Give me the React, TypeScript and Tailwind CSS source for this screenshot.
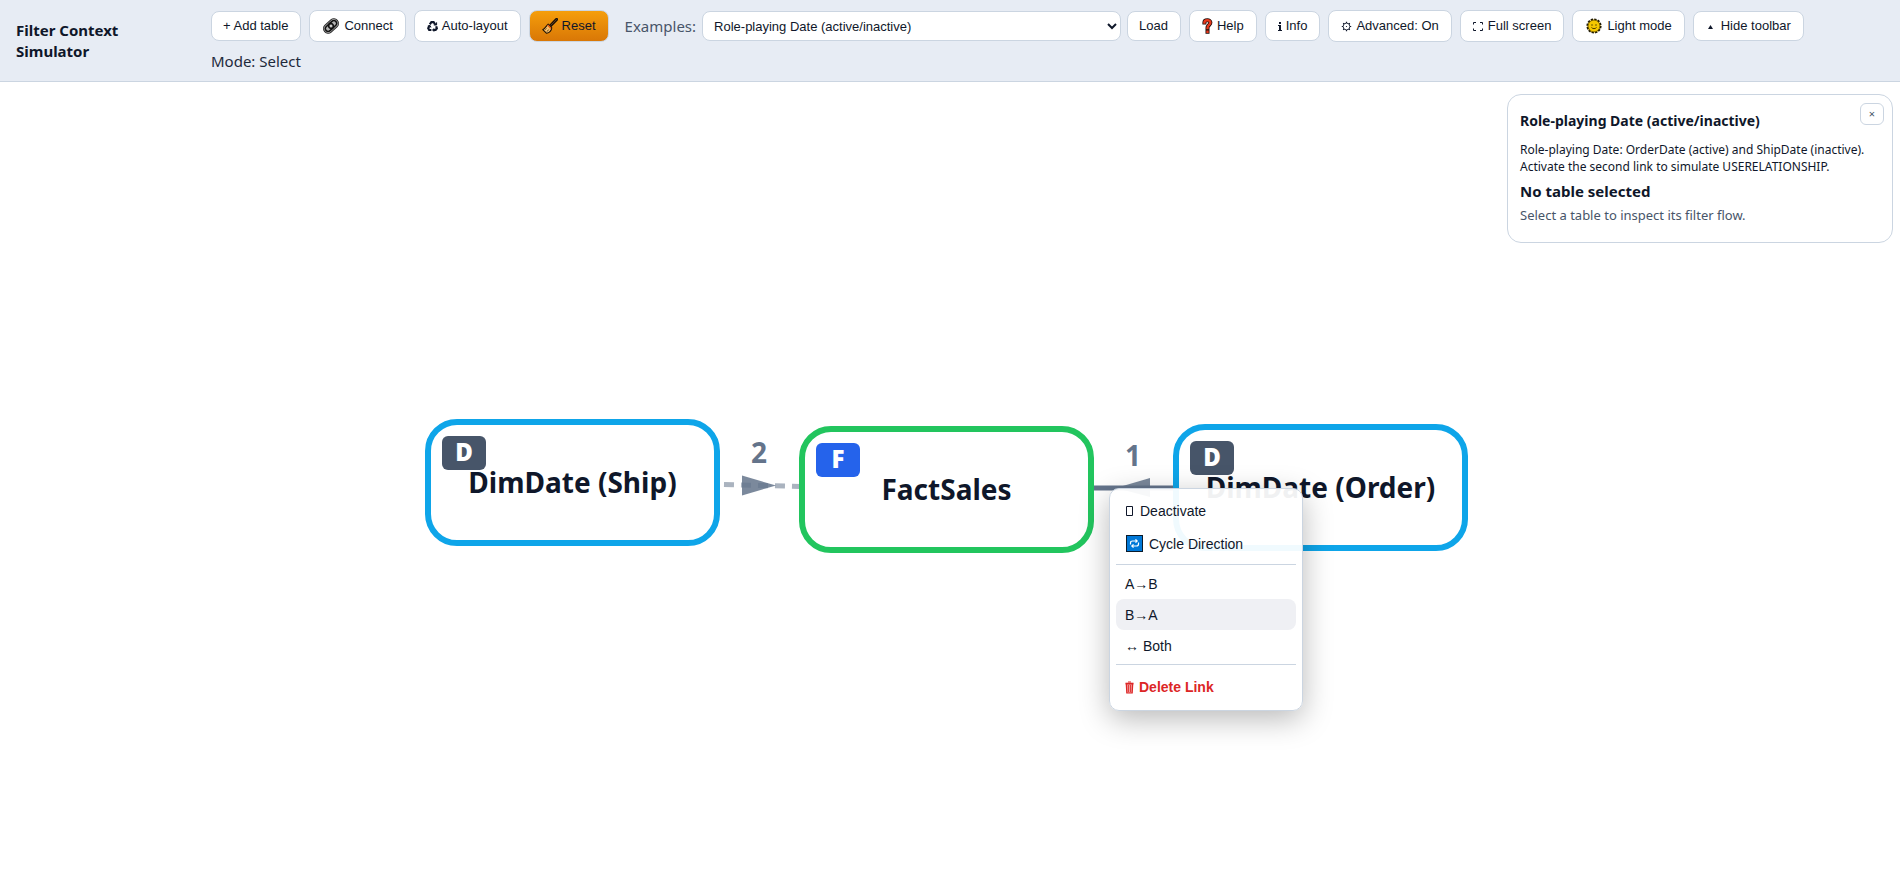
import { useState, type ReactNode } from "react";

const UI = "font-['Noto_Sans',sans-serif]";
const CONTROL = "font-['Liberation_Sans',Arial,sans-serif] text-[13px] text-[#0f172a]";

function LinkIcon() {
  return (
    <svg width="18" height="18" viewBox="0 0 18 18" fill="none" aria-hidden="true">
      <g transform="rotate(-42 9 9)">
        <rect x="0.5" y="4.4" width="17" height="9.2" rx="4.6" fill="#b4b4b4" stroke="#2a2a2a" strokeWidth="1" />
        <rect x="2.4" y="6.2" width="9" height="5.6" rx="2.8" stroke="#111" strokeWidth="1.5" />
        <rect x="6.6" y="6.2" width="9" height="5.6" rx="2.8" stroke="#111" strokeWidth="1.5" />
        <circle cx="9" cy="9" r="1.5" fill="#fff" stroke="#333" strokeWidth=".8" />
      </g>
    </svg>
  );
}

function RecycleIcon() {
  return (
    <svg width="11" height="12" viewBox="0 0 11 12" fill="none" stroke="#0f172a" strokeWidth="2.2" aria-hidden="true">
      <path d="M2.8 4.4 4.4 2.2h2.2l1.4 2" />
      <path d="M9.2 6.2 9.8 8.4 8.6 10H6.4" />
      <path d="M4.4 10H2.2L1.2 8.2 2.2 6.2" />
      <path d="M9.6 2.4v2.6H6.8M7 8.4 5.6 10 7 11.5M.8 6l2.2-.6 1 2" strokeWidth="1" fill="#0f172a" />
    </svg>
  );
}

function BroomIcon() {
  return (
    <svg width="16" height="16" viewBox="0 0 16 16" aria-hidden="true">
      <path d="M14.6 1.4 8.2 8" stroke="#1c1206" strokeWidth="3" strokeLinecap="round" />
      <path d="M14.4 1.6 8.6 7.4" stroke="#5a3a20" strokeWidth="1" strokeLinecap="round" />
      <path d="M6.2 6.2 9.8 9.8C9.4 13 7 14.8 4.6 15.3L.8 11.6C2.6 11.2 4.2 8 6.2 6.2Z" fill="#f9c06a" stroke="#1c1206" strokeWidth="1.1" strokeLinejoin="round" />
      <path d="M5.6 7 9 10.4" stroke="#e8590c" strokeWidth="1.4" />
      <path d="M3 11.8 4.4 10.4M5 13.6 6.6 11.6" stroke="#1c1206" strokeWidth=".7" />
    </svg>
  );
}

function HelpIcon() {
  return (
    <svg width="11" height="16" viewBox="0 0 11 16" fill="none" strokeLinecap="square" aria-hidden="true">
      <path d="M2.4 4.6C2.4 1.6 8.4 1.4 8.4 4.6 8.4 7 5.5 7 5.5 10M5.5 13.6v.2" stroke="#1b0d0a" strokeWidth="4" />
      <path d="M2.4 4.6C2.4 1.6 8.4 1.4 8.4 4.6 8.4 7 5.5 7 5.5 10M5.5 13.6v.2" stroke="#e8381b" strokeWidth="2.4" />
    </svg>
  );
}

function InfoIcon() {
  return (
    <svg width="4" height="11" viewBox="0 0 4 11" fill="#0f172a" aria-hidden="true">
      <path d="M1 1h2v2H1zM0 4h3v5h1v1H0V9h1V5H0z" />
    </svg>
  );
}

function GearIcon() {
  return (
    <svg width="11" height="11" viewBox="0 0 11 11" fill="none" stroke="#0f172a" aria-hidden="true">
      <circle cx="5.5" cy="5.5" r="3.4" strokeWidth=".9" />
      <circle cx="5.5" cy="5.5" r=".6" fill="#0f172a" stroke="none" />
      <path
        d="M5.5.8v1.2M5.5 9v1.2M.8 5.5H2M9 5.5h1.2M2.2 2.2l.8.8M8 8l.8.8M8.8 2.2 8 3M3 8l-.8.8"
        strokeWidth="1.2"
      />
    </svg>
  );
}

function ExpandIcon() {
  return (
    <svg width="11" height="11" viewBox="0 0 11 11" fill="none" stroke="#0f172a" strokeWidth="1" aria-hidden="true">
      <path d="M.5 3.5v-2H3M7 1.500h2.5v2M9.5 7.5v2H7M3 9.5H.5v-2" />
    </svg>
  );
}

function SunIcon() {
  return (
    <svg width="18" height="18" viewBox="0 0 18 18" aria-hidden="true">
      <circle cx="9" cy="9" r="6.6" fill="#ffc800" stroke="#1f1a05" strokeWidth="2" strokeDasharray="2.3 1.16" />
      <circle cx="9" cy="9" r="5.9" fill="#f5c800" stroke="#4a3a00" strokeWidth=".6" />
      <circle cx="7" cy="8" r=".7" fill="#3b2d00" />
      <circle cx="11" cy="8" r=".7" fill="#3b2d00" />
      <path d="M6.5 10.5c1.1 1.5 3.9 1.5 5 0" fill="none" stroke="#3b2d00" strokeWidth=".9" />
    </svg>
  );
}

function TriangleIcon() {
  return (
    <svg width="11" height="11" viewBox="0 0 11 11" fill="#0f172a" aria-hidden="true">
      <path d="M4.5 4 7 8H2z" />
    </svg>
  );
}

function MissingGlyphIcon() {
  return (
    <svg width="8" height="12" viewBox="0 0 8 12" fill="none" stroke="#0f172a" strokeWidth="1" aria-hidden="true">
      <path d="M1.5 1.5h6v9h-6z" />
    </svg>
  );
}

function CycleIcon() {
  return (
    <svg width="17" height="17" viewBox="0 0 17 17" fill="none" aria-hidden="true">
      <rect x=".5" y=".5" width="16" height="16" fill="#0078d7" stroke="#0b1b2b" />
      <path
        d="M4.5 9.5V8c0-1.4.8-2 2-2H11M9.5 4.3 11.2 6 9.5 7.7M12.5 7.5V9c0 1.4-.8 2-2 2H6M7.5 9.3 5.8 11l1.7 1.7"
        stroke="#fff"
        strokeWidth="1.2"
      />
    </svg>
  );
}

function TrashIcon() {
  return (
    <svg width="9" height="13" viewBox="0 0 9 13" fill="none" stroke="#dc2626" aria-hidden="true">
      <path d="M.5 2.5h8" strokeWidth="1.6" />
      <path d="M3 1h3" strokeWidth="1" />
      <path d="M1.3 3 1.8 12h5.4l.5-9z" fill="#f29a9a" strokeWidth="1.2" />
      <path d="M3.4 4v7M5.6 4v7" strokeWidth=".9" />
    </svg>
  );
}

function ToolButton({ icon, tall, accent, children }: { icon?: ReactNode; tall?: boolean; accent?: boolean; children: ReactNode }) {
  return (
    <button
      type="button"
      className={`${CONTROL} flex items-center gap-1 whitespace-nowrap rounded-lg border border-[#cbd5e1] pr-3 ${
        icon ? "pl-3" : "pl-[11px]"
      } ${tall ? "h-8" : "h-[30px]"} ${accent ? "bg-[linear-gradient(#f59e0b,#d97706)]" : "bg-white"}`}
    >
      {icon}
      {children}
    </button>
  );
}

function Toolbar() {
  const [example, setExample] = useState("role");
  return (
    <header className="flex items-center border-b border-[#cbd5e1] bg-[#e7ecf4] px-4 pt-2.5 pb-2">
      <h1 className="w-[195px] shrink-0 pr-16 pb-0.5 text-[15px] leading-[21px] font-bold">Filter Context Simulator</h1>
      <div className="flex grow flex-wrap items-center gap-2">
        <ToolButton>+ Add table</ToolButton>
        <ToolButton tall icon={<LinkIcon />}>Connect</ToolButton>
        <ToolButton tall icon={<RecycleIcon />}>Auto-layout</ToolButton>
        <ToolButton tall accent icon={<BroomIcon />}>Reset</ToolButton>
        <div className="ml-2 flex items-center gap-1.5">
          <label htmlFor="example" className="text-[15px] leading-[21px] text-[#475569]">Examples:</label>
          <select
            id="example"
            value={example}
            onChange={(e) => setExample(e.target.value)}
            className={`${CONTROL} h-[30px] w-[419px] rounded-lg border border-[#cbd5e1] bg-white px-[7px]`}
          >
            <option value="role">Role-playing Date (active/inactive)</option>
          </select>
          <ToolButton>Load</ToolButton>
        </div>
        <ToolButton tall icon={<HelpIcon />}>Help</ToolButton>
        <ToolButton icon={<InfoIcon />}>Info</ToolButton>
        <ToolButton tall icon={<GearIcon />}>Advanced: On</ToolButton>
        <ToolButton tall icon={<ExpandIcon />}>Full screen</ToolButton>
        <ToolButton tall icon={<SunIcon />}>Light mode</ToolButton>
        <ToolButton icon={<TriangleIcon />}>Hide toolbar</ToolButton>
        <p className="basis-full text-[15px] leading-[23px] text-[#1e293b]">Mode: Select</p>
      </div>
    </header>
  );
}

function TableNode({ name, kind, className }: { name: string; kind: "D" | "F"; className: string }) {
  return (
    <div
      className={`absolute flex h-[127px] w-[295px] items-center justify-center rounded-[32px] border-6 bg-white pb-0.5 ${
        kind === "F" ? "border-[#22c55e]" : "border-[#0ea5e9]"
      } ${className}`}
    >
      <span
        className={`absolute top-[11px] left-[11px] flex h-[34px] w-11 items-center justify-center rounded-md pb-0.5 font-['Noto_Sans',sans-serif] text-2xl leading-6 font-black text-white ${
          kind === "F" ? "bg-[#2563eb]" : "bg-[#475569]"
        }`}
      >
        {kind}
      </span>
      <span className="relative text-[28px] leading-7 font-bold whitespace-nowrap">{name}</span>
    </div>
  );
}

function Links() {
  return (
    <svg className="absolute top-[381px] left-[720px]" width="460" height="50" viewBox="0 0 460 50" aria-hidden="true">
      <path d="M4 21.5 80 23.5" stroke="#64748b" strokeOpacity=".55" strokeWidth="5" strokeDasharray="10 7" />
      <path d="M22 12.5v20l34-10z" fill="#64748b" fillOpacity=".85" />
      <path d="M372 25h84" stroke="#64748b" strokeWidth="5" />
      <path d="M430 15v19l-34-9z" fill="#64748b" fillOpacity=".85" />
    </svg>
  );
}

function InfoPanel() {
  return (
    <aside className="absolute top-3 right-[7px] w-[386px] rounded-[14px] border border-[#cbd5e1] bg-white px-3 pt-4 pb-[17px]">
      <button
        type="button"
        aria-label="Close"
        className="absolute top-2 right-2 flex h-[22px] w-6 items-center justify-center rounded-md border border-[#cbd5e1] bg-white text-[11px] text-[#475569]"
      >
        ×
      </button>
      <h2 className="text-sm leading-5 font-bold">Role-playing Date (active/inactive)</h2>
      <p className="mt-2.5 text-xs leading-[17px] whitespace-nowrap">
        Role-playing Date: OrderDate (active) and ShipDate (inactive).
        <br />
        Activate the second link to simulate USERELATIONSHIP.
      </p>
      <h3 className="mt-[5px] text-[15px] leading-[22px] font-bold">No table selected</h3>
      <p className="mt-[3px] text-[13px] leading-5 text-[#475569]">Select a table to inspect its filter flow.</p>
    </aside>
  );
}

function MenuItem({ className = "h-[31px]", children }: { className?: string; children: ReactNode }) {
  return (
    <button type="button" role="menuitem" className={`flex w-full items-center rounded-lg px-[9px] text-left ${className}`}>
      {children}
    </button>
  );
}

function LinkMenu() {
  return (
    <div
      role="menu"
      className="absolute top-[406px] left-[1109px] w-[194px] rounded-[10px] border border-[#cbd5e1] bg-white/94 p-1.5 font-['Liberation_Sans',Arial,sans-serif] text-sm shadow-[0_8px_30px_rgba(0,0,0,0.28)]"
    >
      <MenuItem className="h-[31px] gap-[7px]"><MissingGlyphIcon />Deactivate</MenuItem>
      <MenuItem className="h-[35px] gap-1.5 pl-2.5"><CycleIcon />Cycle Direction</MenuItem>
      <hr className="my-[3px] border-[#cbd5e1]" />
      <MenuItem>A→B</MenuItem>
      <MenuItem className="h-[31px] bg-[#eff0f4]">B→A</MenuItem>
      <MenuItem>↔ Both</MenuItem>
      <hr className="my-[3px] border-[#cbd5e1]" />
      <MenuItem className="h-9 gap-[5px] pt-0.5 font-bold text-[#dc2626]"><TrashIcon />Delete Link</MenuItem>
    </div>
  );
}

export default function App() {
  return (
    <div className={`${UI} flex min-h-screen flex-col bg-white text-[#0f172a]`}>
      <Toolbar />
      <main className="relative grow overflow-hidden">
        <Links />
        <span className="absolute top-[354px] left-[751px] text-[28px] leading-8 font-bold text-[#64748b]">2</span>
        <span className="absolute top-[357px] left-[1125px] text-[28px] leading-8 font-bold text-[#64748b]">1</span>
        <TableNode name="DimDate (Ship)" kind="D" className="top-[337px] left-[425px]" />
        <TableNode name="FactSales" kind="F" className="top-[344px] left-[799px]" />
        <TableNode name="DimDate (Order)" kind="D" className="top-[342px] left-[1173px]" />
        <InfoPanel />
        <LinkMenu />
      </main>
    </div>
  );
}
